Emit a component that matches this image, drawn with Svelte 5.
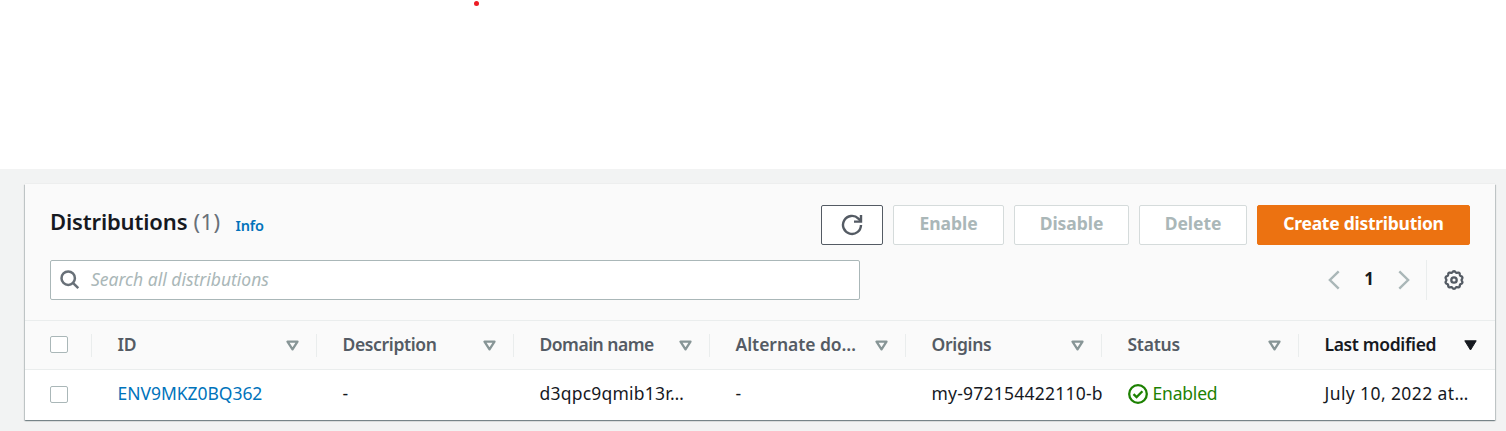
<script>
  const columns = [
    { name: 'ID', width: 225, ls: -0.3 },
    { name: 'Description', width: 197, ls: -0.35 },
    { name: 'Domain name', width: 196, ls: -0.5 },
    { name: 'Alternate do…', width: 196, ls: -0.05 },
    { name: 'Origins', width: 196, ls: -0.3 },
    { name: 'Status', width: 197, ls: -0.25 },
    { name: 'Last modified', width: 197, ls: -0.35, sorted: true }
  ];
  const cells = [
    { text: 'ENV9MKZ0BQ362', kind: 'link', ls: -0.04 },
    { text: '-', ls: 0 },
    { text: 'd3qpc9qmib13r…', ls: 0.22 },
    { text: '-', ls: 0 },
    { text: 'my-972154422110-b', ls: 0.23 },
    { text: 'Enabled', kind: 'status', ls: -0.2 },
    { text: 'July 10, 2022 at…', ls: 0.4 }
  ];
  const actions = [
    { label: 'Enable', width: 111 },
    { label: 'Disable', width: 115 },
    { label: 'Delete', width: 108 }
  ];
  const gear = Array.from({ length: 121 }, (_, i) => {
    const a = (i / 120) * Math.PI * 2;
    const r = 8.2 + 0.6 * Math.cos(a * 10);
    return `${(10 + r * Math.sin(a)).toFixed(2)},${(10 - r * Math.cos(a)).toFixed(2)}`;
  }).join(' ');
</script>

<div class="top"><span class="dot"></span></div>
<main>
  <section class="panel">
    <header>
      <div class="title-row">
        <h1><span class="title">Distributions</span> <span class="count">(1)</span></h1>
        <a class="info" href="#info">Info</a>
        <div class="actions">
          <button class="refresh" aria-label="Refresh">
            <svg width="22" height="22" viewBox="0 0 22 22" fill="none" stroke="#545b64" stroke-width="2.4">
              <path d="M20 11a9 9 0 1 1-2.6-6.4l2.3 2.3" /><path d="M20 1v6.6h-7" />
            </svg>
          </button>
          {#each actions as a}
            <button class="disabled" style="width:{a.width}px">{a.label}</button>
          {/each}
          <button class="primary">Create distribution</button>
        </div>
      </div>
      <div class="tools">
        <div class="search">
          <svg width="20" height="20" viewBox="0 0 20 20" fill="none" stroke="#687078" stroke-width="2.5">
            <circle cx="8.2" cy="8.2" r="6.7" /><path d="M12.9 12.9l5.4 5.2" />
          </svg>
          <span>Search all distributions</span>
        </div>
        <div class="pager">
          <svg width="12" height="20" viewBox="0 0 12 20" fill="none" stroke="#aab7b8" stroke-width="2.4"><path d="M10.7 1.4L1.9 10l8.8 8.6" /></svg>
          <b>1</b>
          <svg width="12" height="20" viewBox="0 0 12 20" fill="none" stroke="#aab7b8" stroke-width="2.4"><path d="M1.3 1.4l8.8 8.6-8.8 8.6" /></svg>
        </div>
        <div class="settings">
          <svg width="20" height="20" viewBox="0 0 20 20" fill="none" stroke="#545b64" stroke-width="2.3">
            <polygon points={gear} /><circle cx="10" cy="10" r="2.7" />
          </svg>
        </div>
      </div>
    </header>
    <div class="row head">
      <div class="check"><i></i></div>
      {#each columns as c}
        <div class="cell" class:sorted={c.sorted} style="width:{c.width}px">
          <span style="letter-spacing:{c.ls}px">{c.name}</span>
          <svg width="13" height="11" viewBox="0 0 13 11">
            {#if c.sorted}
              <path d="M0.8 0.8h11.4L6.5 10z" fill="#16191f" stroke="#16191f" stroke-linejoin="round" />
            {:else}
              <path d="M1.5 1.6h10L6.5 9.3z" fill="none" stroke="#879596" stroke-width="2.3" stroke-linejoin="round" />
            {/if}
          </svg>
        </div>
      {/each}
    </div>
    <div class="row body">
      <div class="check"><i></i></div>
      {#each cells as c, i}
        <div class="cell {c.kind ?? ''}" style="width:{columns[i].width}px">
          {#if c.kind === 'status'}
            <svg width="20" height="20" viewBox="0 0 20 20" fill="none" stroke="#1d8102" stroke-width="2.3">
              <circle cx="10" cy="10" r="8.8" /><path d="M5.5 10.1l3.1 3 5.8-5.8" />
            </svg>
          {/if}
          <span style="letter-spacing:{c.ls}px">{c.text}</span>
        </div>
      {/each}
    </div>
  </section>
</main>

<style>
  :global(body) { background: #fff; overflow: hidden; }
  :global(#app) { font-family: "Noto Sans", "Open Sans", sans-serif; font-size: 17.5px; color: #16191f; }
  .top { height: 169px; display: flex; padding-left: 473.5px; box-sizing: border-box; }
  .dot { width: 5px; height: 5px; margin-top: 1px; border-radius: 50%; background: #ed1c24; }
  main { height: 262px; box-sizing: border-box; background: #f2f3f3; padding: 15px 11px 0 25px; }
  .panel { height: 236px; background: #fff; box-shadow: 0 1px 1px 0 rgba(0, 28, 36, .3), 1px 1px 1px 0 rgba(0, 28, 36, .15), -1px 1px 1px 0 rgba(0, 28, 36, .15), 0 0 1px 0 rgba(0, 28, 36, .12); }
  header { height: 136px; box-sizing: border-box; background: #fafafa; padding: 21px 25px 0; }
  .title-row { display: flex; height: 40px; }
  h1 { margin: 0; font-size: 22px; line-height: 32px; font-weight: 600; white-space: nowrap; width: 185.5px; }
  .title { letter-spacing: -.15px; }
  .count { font-weight: 400; color: #687078; margin-left: .5px; letter-spacing: .3px; }
  .info { color: #0073bb; text-decoration: none; font-size: 14.5px; font-weight: 600; line-height: 40px; letter-spacing: -.2px; }
  .actions { margin-left: auto; display: flex; gap: 10px; }
  button { box-sizing: border-box; height: 40px; border-radius: 2px; font: 700 17.5px/34px "Noto Sans", sans-serif; letter-spacing: -.05px; padding: 0 0 4px; background: #fff; border: 1px solid #d5dbdb; color: #aab7b8; white-space: nowrap; }
  .refresh { width: 62px; border-color: #545b64; display: flex; align-items: center; justify-content: center; padding: 0; }
  .disabled, .primary { padding-bottom: 5px; }
  .primary { width: 213px; background: #ec7211; border-color: #ec7211; color: #fff; letter-spacing: -.27px; }
  .tools { display: flex; height: 40px; margin-top: 15px; }
  .search { box-sizing: border-box; width: 810px; border: 1px solid #aab7b8; border-radius: 2px; background: #fff; display: flex; align-items: center; gap: 11px; padding-left: 9px; font-style: italic; color: #aab7b8; letter-spacing: 0; }
  .search span { padding-bottom: 2px; }
  .pager { margin-left: auto; display: flex; align-items: center; width: 98px; box-sizing: border-box; justify-content: space-between; padding-right: 16px; }
  .pager b { font-size: 17px; padding-bottom: 4px; }
  .settings { width: 44px; border-left: 1px solid #eaeded; display: flex; align-items: center; padding-left: 17px; box-sizing: border-box; }
  .row { display: flex; box-sizing: border-box; }
  .head { height: 50px; background: #fafafa; border-top: 1px solid #eaeded; border-bottom: 1px solid #eaeded; align-items: center; font-weight: 600; color: #545b64; }
  .body { height: 50px; align-items: center; padding-bottom: 2px; }
  .check { width: 66px; padding-left: 25px; box-sizing: border-box; flex: none; }
  .check i { display: block; width: 18px; height: 17px; border: 1px solid #aab7b8; border-radius: 2px; background: #fff; box-sizing: border-box; }
  .head .check { padding-bottom: 1px; }
  .cell { flex: none; height: 23px; line-height: 23px; box-sizing: border-box; border-left: 1px solid transparent; padding: 0 17px 0 25.5px; display: flex; align-items: center; justify-content: space-between; white-space: nowrap; }
  .head .cell { border-left-color: #eaeded; line-height: 23px; }
  .cell span { padding-bottom: 2px; }
  .head .cell.sorted { color: #16191f; padding-right: 18px; }
  .body .cell { padding-right: 0; justify-content: flex-start; }
  .link { color: #0073bb; }
  .status { color: #1d8102; gap: 5px; }
</style>
